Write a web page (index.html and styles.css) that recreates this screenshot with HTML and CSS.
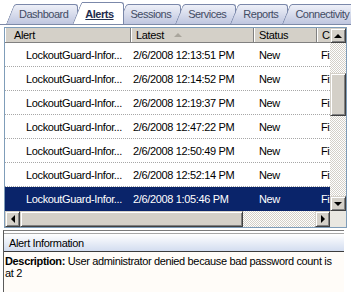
FILE: index.html
```html
<!DOCTYPE html>
<html lang="en">
<head>
    <meta charset="UTF-8">
    <title>Alerts</title>
    <link rel="stylesheet" href="styles.css">
</head>
<body>
    <div class="tabs">
        <div class="tab">Dashboard</div>
        <div class="tab active"><span class="tab-label">Alerts</span></div>
        <div class="tab">Sessions</div>
        <div class="tab">Services</div>
        <div class="tab">Reports</div>
        <div class="tab">Connectivity</div>
    </div>

    <div class="list">
        <div class="list-main">
            <div class="grid">
                <div class="row header">
                    <div class="cell">Alert</div>
                    <div class="cell">Latest <span class="sort-arrow"></span></div>
                    <div class="cell">Status</div>
                    <div class="cell">Category</div>
                </div>
                <div class="row">
                    <div class="cell">LockoutGuard-Infor...</div>
                    <div class="cell">2/6/2008 12:13:51 PM</div>
                    <div class="cell">New</div>
                    <div class="cell">Fix</div>
                </div>
                <div class="row">
                    <div class="cell">LockoutGuard-Infor...</div>
                    <div class="cell">2/6/2008 12:14:52 PM</div>
                    <div class="cell">New</div>
                    <div class="cell">Fix</div>
                </div>
                <div class="row">
                    <div class="cell">LockoutGuard-Infor...</div>
                    <div class="cell">2/6/2008 12:19:37 PM</div>
                    <div class="cell">New</div>
                    <div class="cell">Fix</div>
                </div>
                <div class="row">
                    <div class="cell">LockoutGuard-Infor...</div>
                    <div class="cell">2/6/2008 12:47:22 PM</div>
                    <div class="cell">New</div>
                    <div class="cell">Fix</div>
                </div>
                <div class="row">
                    <div class="cell">LockoutGuard-Infor...</div>
                    <div class="cell">2/6/2008 12:50:49 PM</div>
                    <div class="cell">New</div>
                    <div class="cell">Fix</div>
                </div>
                <div class="row">
                    <div class="cell">LockoutGuard-Infor...</div>
                    <div class="cell">2/6/2008 12:52:14 PM</div>
                    <div class="cell">New</div>
                    <div class="cell">Fix</div>
                </div>
                <div class="row selected">
                    <div class="cell">LockoutGuard-Infor...</div>
                    <div class="cell">2/6/2008 1:05:46 PM</div>
                    <div class="cell">New</div>
                    <div class="cell">Fix</div>
                </div>
            </div>

            <div class="vscroll">
                <div class="sb-btn"><span class="arrow up"></span></div>
                <div class="sb-track vertical"><div class="sb-thumb"></div></div>
                <div class="sb-btn"><span class="arrow down"></span></div>
            </div>
        </div>

        <div class="hscroll-row">
            <div class="hscroll">
                <div class="sb-btn"><span class="arrow left"></span></div>
                <div class="sb-track horizontal"><div class="sb-thumb"></div></div>
                <div class="sb-btn"><span class="arrow right"></span></div>
            </div>
            <div class="corner"></div>
        </div>
    </div>

    <div class="info">
        <div class="info-title">Alert Information</div>
        <div class="info-body"><b>Description:</b> User administrator denied because bad password count is at 2</div>
    </div>
</body>
</html>
```

FILE: styles.css
```css
* {
    margin: 0;
    padding: 0;
    box-sizing: border-box;
}

body {
    background: #ffffff;
    font-family: 'Liberation Sans', Arial, sans-serif;
    font-size: 11px;
    letter-spacing: -0.35px;
    color: #000000;
    width: 351px;
    height: 296px;
    overflow: hidden;
}

/* tab strip */

.tabs {
    display: flex;
    align-items: flex-end;
    height: 25px;
    padding-left: 6px;
    border-bottom: 1px solid #7d8aa8;
    overflow: hidden;
}

.tab {
    position: relative;
    z-index: 0;
    flex-shrink: 0;
    height: 21px;
    line-height: 21px;
    padding: 0 10px 0 13px;
    margin-right: -6px;
    margin-bottom: -1px;
    letter-spacing: -0.5px;
    color: #434c64;
    white-space: nowrap;
}

.tab::before,
.tab::after {
    content: '';
    position: absolute;
    z-index: -1;
    top: 0;
    bottom: 1px;
    background: linear-gradient(#eef0f8, #bfc6df);
    border-top: 1px solid #7b88aa;
}

.tab::before {
    left: 0;
    width: 18px;
    border-left: 1px solid #7b88aa;
    border-top-left-radius: 3px;
    transform-origin: bottom left;
    transform: skewX(-22deg);
}

.tab::after {
    left: 10px;
    right: 0;
    border-right: 1px solid #7b88aa;
    border-top-right-radius: 3px;
}

.tab.active {
    z-index: 2;
    height: 23px;
    line-height: 24px;
    font-weight: bold;
    color: #1d2c4e;
}

.tab.active::before,
.tab.active::after {
    bottom: 0;
    background: #ffffff;
}

.tab-label {
    text-decoration: underline;
}

/* list view */

.list {
    margin: 2px 0 0 4px;
    width: 343px;
    border: 1px solid #7f9db9;
}

.list-main {
    display: flex;
}

.grid {
    width: 325px;
    overflow: hidden;
}

.row {
    display: grid;
    grid-template-columns: 126px 123px 63px 60px;
    height: 24px;
    align-items: center;
    border-bottom: 1px dotted #a7a7a7;
    white-space: nowrap;
}

.row .cell:nth-child(1) { padding-left: 21px; }
.row .cell:nth-child(2) { padding-left: 2px; }
.row .cell:nth-child(3) { padding-left: 5px; }
.row .cell:nth-child(4) { padding-left: 4px; }

.row.header {
    height: 15px;
    background: #d4d0c8;
    border-bottom: 1px solid #808080;
}

.header .cell {
    height: 100%;
    line-height: 14px;
    border-right: 1px solid #808080;
    box-shadow: inset 1px 0 #ffffff;
}

.header .cell:nth-child(1) { padding-left: 9px; }
.header .cell:nth-child(2) { padding-left: 5px; }
.header .cell:nth-child(3) { padding-left: 5px; }
.header .cell:nth-child(4) { padding-left: 5px; }

.sort-arrow {
    display: inline-block;
    margin-left: 7px;
    vertical-align: 2px;
    border-left: 4px solid transparent;
    border-right: 4px solid transparent;
    border-bottom: 4px solid #a9a59c;
}

.row.selected {
    background: #0a246a;
    color: #ffffff;
    border-bottom: none;
}

/* scrollbars */

.vscroll {
    display: flex;
    flex-direction: column;
    width: 16px;
}

.sb-btn {
    display: flex;
    align-items: center;
    justify-content: center;
    width: 16px;
    height: 15px;
    background: #d4d0c8;
    border: 1px solid;
    border-color: #d4d0c8 #404040 #404040 #d4d0c8;
    box-shadow: inset 1px 1px #ffffff, inset -1px -1px #808080;
}

.hscroll .sb-btn {
    width: 15px;
    height: 16px;
}

.sb-track {
    flex: 1;
    background-color: #ffffff;
    background-image: repeating-conic-gradient(#d4d0c8 0 25%, #ffffff 0 50%);
    background-size: 2px 2px;
}

.sb-track.vertical {
    padding-top: 30px;
}

.sb-track.vertical .sb-thumb {
    height: 43px;
}

.sb-track.horizontal .sb-thumb {
    width: 223px;
    height: 100%;
}

.sb-thumb {
    background: #d4d0c8;
    border: 1px solid;
    border-color: #d4d0c8 #404040 #404040 #d4d0c8;
    box-shadow: inset 1px 1px #ffffff, inset -1px -1px #808080;
}

.arrow {
    width: 0;
    height: 0;
    border: 4px solid transparent;
}

.arrow.up { border-bottom-color: #000; border-top-width: 0; }
.arrow.down { border-top-color: #000; border-bottom-width: 0; }
.arrow.left { border-right-color: #000; border-left-width: 0; }
.arrow.right { border-left-color: #000; border-right-width: 0; }

.hscroll-row {
    display: flex;
    height: 16px;
}

.hscroll {
    display: flex;
    width: 325px;
}

.corner {
    flex: 1;
    background: #e9e7e1;
}

/* alert information panel */

.info {
    margin: 2px 0 0 3px;
    width: 341px;
    height: 62px;
    border-top: 1px solid #7a7a7a;
    border-left: 1px solid #5a5a5a;
    padding-top: 2px;
    overflow: hidden;
}

.info-title {
    height: 19px;
    line-height: 18px;
    padding-left: 5px;
    border-top: 1px solid #a8a8a8;
    border-bottom: 1px solid #3c3c3c;
    background: linear-gradient(#ffffff, #d3ddf0);
}

.info-body {
    height: 40px;
    padding: 3px 2px 0 1px;
    line-height: 12px;
    background: #fffcf8;
}
```
